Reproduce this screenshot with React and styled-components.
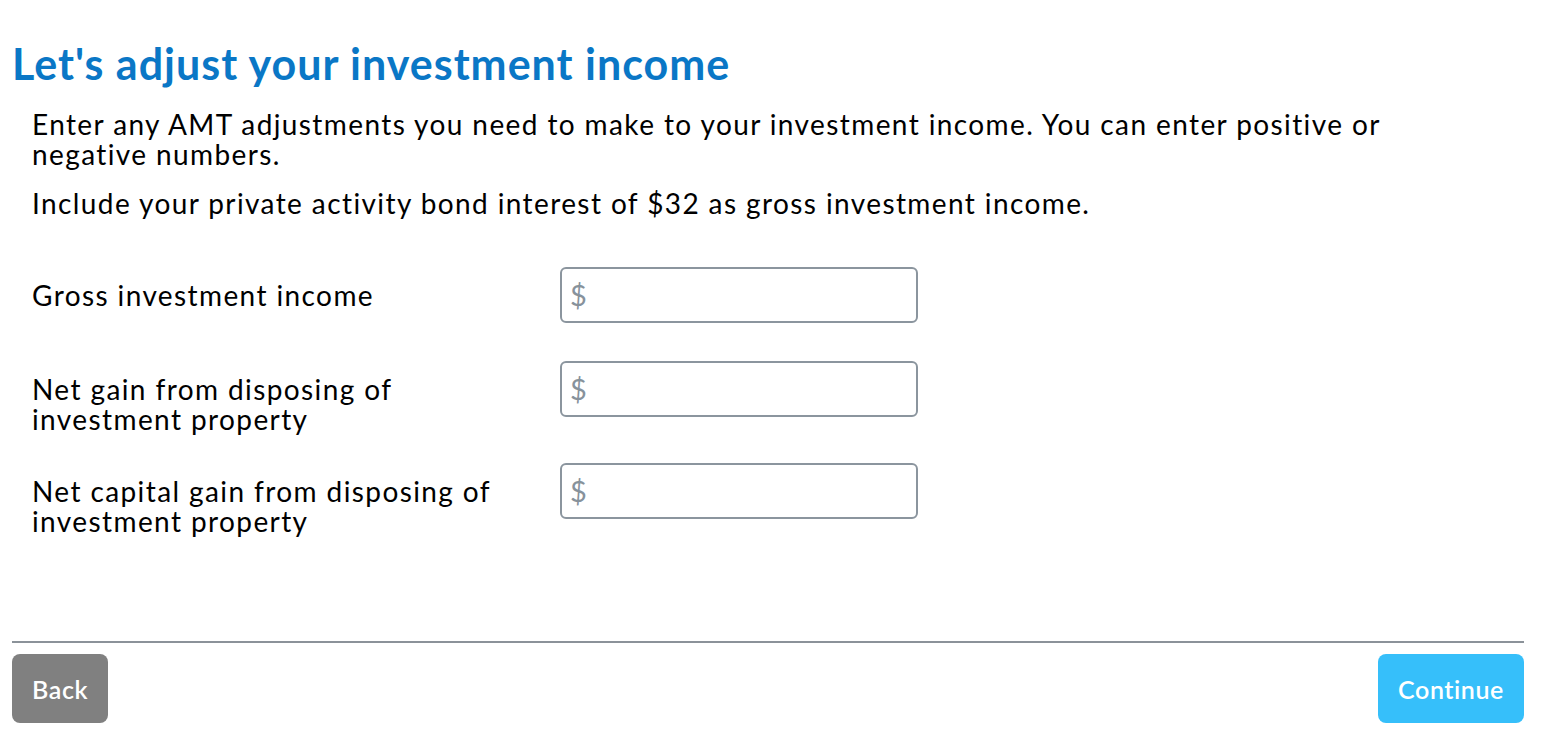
import React from 'react';
import styled, { createGlobalStyle } from 'styled-components';

const GlobalStyle = createGlobalStyle`
  body {
    margin: 0;
    background: #fff;
    font-family: Lato, "Noto Sans", sans-serif;
    color: #000;
  }
`;

const Page = styled.div`
  padding: 36px 40px 0 12px;
`;

const Title = styled.h1`
  margin: 0;
  font-size: 43px;
  line-height: 56px;
  font-weight: 700;
  letter-spacing: 1px;
  color: #0a77c6;
`;

const Body = styled.div`
  padding-left: 20px;
  margin-top: 17px;
`;

const Para = styled.p`
  margin: 0 0 19px;
  font-size: 28px;
  line-height: 30px;
  letter-spacing: 1.4px;
`;

const Fields = styled.div`
  margin-top: 49px;
`;

const Row = styled.div`
  display: grid;
  grid-template-columns: 528px 358px;
  align-items: start;
  margin-top: ${(p) => p.$gap}px;
`;

const Label = styled.label`
  font-size: 28px;
  line-height: 30px;
  letter-spacing: 1.4px;
  padding-top: 13px;
`;

const Field = styled.div`
  height: 56px;
  box-sizing: border-box;
  border: 2px solid #8b959e;
  border-radius: 6px;
  display: flex;
  align-items: center;
`;

const Dollar = styled.span`
  font-size: 29px;
  font-weight: 400;
  color: #87929b;
  padding-left: 8px;
  padding-bottom: 2px;
`;

const Input = styled.input`
  border: none;
  outline: none;
  flex: 1;
  min-width: 0;
  font: inherit;
  font-size: 27px;
  background: transparent;
`;

const Spacer = styled.div`
  height: 105px;
`;

const Divider = styled.hr`
  margin: 0;
  border: none;
  border-top: 2px solid #8b9299;
`;

const Footer = styled.div`
  margin-top: 11px;
  display: flex;
  justify-content: space-between;
`;

const Button = styled.button`
  height: 69px;
  padding: 0 20px;
  border: none;
  border-radius: 8px;
  background: ${(p) => (p.$primary ? '#36bffa' : '#808080')};
  color: #fff;
  font-family: Lato, "Noto Sans", sans-serif;
  font-size: 25px;
  font-weight: 600;
  letter-spacing: 0.6px;
`;

const rows = [
  { label: ['Gross investment income'], gap: 0 },
  { label: ['Net gain from disposing of', 'investment property'], gap: 38 },
  { label: ['Net capital gain from disposing of', 'investment property'], gap: 29 },
];

export default function App() {
  return (
    <>
      <GlobalStyle />
      <Page>
        <Title>Let's adjust your investment income</Title>
        <Body>
          <Para>
            Enter any AMT adjustments you need to make to your investment income. You can enter positive or
            <br />
            negative numbers.
          </Para>
          <Para>Include your private activity bond interest of $32 as gross investment income.</Para>
          <Fields>
            {rows.map((r, i) => (
              <Row key={i} $gap={r.gap}>
                <Label>
                  {r.label.map((line, j) => (
                    <React.Fragment key={j}>
                      {j > 0 && <br />}
                      {line}
                    </React.Fragment>
                  ))}
                </Label>
                <Field>
                  <Dollar>$</Dollar>
                  <Input type="text" />
                </Field>
              </Row>
            ))}
          </Fields>
        </Body>
        <Spacer />
        <Divider />
        <Footer>
          <Button>Back</Button>
          <Button $primary>Continue</Button>
        </Footer>
      </Page>
    </>
  );
}
